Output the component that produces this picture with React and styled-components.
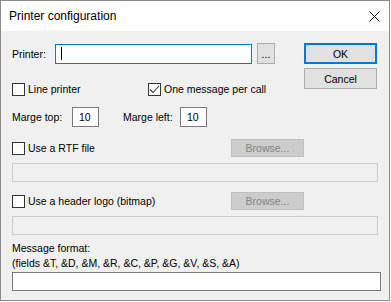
import React from "react";
import styled, { createGlobalStyle } from "styled-components";

const Global = createGlobalStyle`
  html, body { margin: 0; padding: 0; background: #ffffff; }
  body { font-family: "Liberation Sans", Arial, sans-serif; font-size: 10.5px; color: #000; }
  * { box-sizing: border-box; }
`;

const Window = styled.div`
  width: 390px;
  height: 301px;
  border: 1px solid #8c8c8c;
  background: #f0f0f0;
  display: flex;
  flex-direction: column;
`;

const TitleBar = styled.div`
  height: 30px;
  background: #ffffff;
  display: flex;
  align-items: center;
  justify-content: space-between;
  padding: 0 9px 0 8px;
  flex: none;
`;

const Title = styled.span`
  font-size: 12px;
  line-height: 15px;
  margin-top: 1px;
`;

const Body = styled.div`
  flex: 1;
  display: flex;
  flex-direction: column;
  padding: 12px 9px 0 11px;
`;

const TopSection = styled.div`
  display: flex;
  justify-content: space-between;
  padding-right: 3px;
`;

const LeftCol = styled.div`
  display: flex;
  flex-direction: column;
`;

const ButtonCol = styled.div`
  display: flex;
  flex-direction: column;
  gap: 4px;
`;

const Row = styled.div`
  display: flex;
  align-items: center;
  height: ${(p) => p.$h || 20}px;
  margin-top: ${(p) => p.$mt || 0}px;
  width: ${(p) => (p.$w ? p.$w + "px" : "auto")};
  justify-content: ${(p) => p.$justify || "flex-start"};
`;

const Label = styled.span`
  width: ${(p) => (p.$w ? p.$w + "px" : "auto")};
  margin-left: ${(p) => p.$ml || 0}px;
  line-height: 14px;
  white-space: nowrap;
  flex: none;
`;

const TextBox = styled.div`
  width: ${(p) => p.$w}px;
  height: ${(p) => p.$h || 20}px;
  background: ${(p) => (p.$disabled ? "#f0f0f0" : "#ffffff")};
  border: 1px solid ${(p) => (p.$focus ? "#0078d7" : p.$disabled ? "#cccccc" : "#7a7a7a")};
  display: flex;
  align-items: center;
  padding-left: ${(p) => p.$pl || 5}px;
  line-height: 14px;
  flex: none;
  margin-top: ${(p) => p.$mt || 0}px;
`;

const Caret = styled.span`
  width: 1px;
  height: 13px;
  background: #000;
`;

const Button = styled.div`
  width: ${(p) => p.$w}px;
  height: ${(p) => p.$h || 21}px;
  background: ${(p) => (p.$disabled ? "#cccccc" : "#e1e1e1")};
  border: ${(p) => (p.$default ? "2px solid #0078d7" : p.$disabled ? "1px solid #bfbfbf" : "1px solid #adadad")};
  color: ${(p) => (p.$disabled ? "#838383" : "#000")};
  display: flex;
  align-items: center;
  justify-content: center;
  line-height: 14px;
  flex: none;
  margin-left: ${(p) => p.$ml || 0}px;
`;

const CheckWrap = styled.label`
  display: flex;
  align-items: center;
  gap: 3px;
  width: ${(p) => (p.$w ? p.$w + "px" : "auto")};
  flex: none;
`;

const Box = styled.span`
  width: 13px;
  height: 13px;
  border: 1px solid #333333;
  background: #ffffff;
  display: flex;
  align-items: center;
  justify-content: center;
  flex: none;
`;

const Check = ({ checked, children, w }) => (
  <CheckWrap $w={w}>
    <Box>
      {checked && (
        <svg width="11" height="11" viewBox="0 0 11 11">
          <path d="M1 5.5 L4 8.5 L10 2" fill="none" stroke="#333" strokeWidth="1.1" />
        </svg>
      )}
    </Box>
    <Label>{children}</Label>
  </CheckWrap>
);

const MessageLabel = styled.div`
  line-height: 15px;
  margin-top: 6px;
`;

const CloseIcon = () => (
  <svg width="11" height="11" viewBox="0 0 11 11">
    <path d="M0.5 0.5 L10.5 10.5 M10.5 0.5 L0.5 10.5" stroke="#111" strokeWidth="1" fill="none" />
  </svg>
);

export default function App() {
  return (
    <>
      <Global />
      <Window>
        <TitleBar>
          <Title>Printer configuration</Title>
          <CloseIcon />
        </TitleBar>
        <Body>
          <TopSection>
            <LeftCol>
              <Row $h={21}>
                <Label $w={43}>Printer:</Label>
                <TextBox $w={197} $focus $pl={5}>
                  <Caret />
                </TextBox>
                <Button $w={18} $ml={5}>...</Button>
              </Row>
              <Row $h={16} $mt={17}>
                <Check w={136}>Line printer</Check>
                <Check checked>One message per call</Check>
              </Row>
              <Row $h={20} $mt={10}>
                <Label $w={60}>Marge top:</Label>
                <TextBox $w={27} $pl={6}>10</TextBox>
                <Label $w={57} $ml={24}>Marge left:</Label>
                <TextBox $w={27} $pl={6}>10</TextBox>
              </Row>
            </LeftCol>
            <ButtonCol>
              <Button $w={73} $default>OK</Button>
              <Button $w={73}>Cancel</Button>
            </ButtonCol>
          </TopSection>
          <Row $h={18} $mt={12} $w={292} $justify="space-between">
            <Check>Use a RTF file</Check>
            <Button $w={73} $h={18} $disabled>Browse...</Button>
          </Row>
          <TextBox $w={366} $h={19} $disabled $mt={6} />
          <Row $h={18} $mt={10} $w={292} $justify="space-between">
            <Check>Use a header logo (bitmap)</Check>
            <Button $w={73} $h={18} $disabled>Browse...</Button>
          </Row>
          <TextBox $w={366} $h={19} $disabled $mt={6} />
          <MessageLabel>
            Message format:
            <br />
            (fields &amp;T, &amp;D, &amp;M, &amp;R, &amp;C, &amp;P, &amp;G, &amp;V, &amp;S, &amp;A)
          </MessageLabel>
          <TextBox $w={369} $h={19} $mt={1} />
        </Body>
      </Window>
    </>
  );
}
